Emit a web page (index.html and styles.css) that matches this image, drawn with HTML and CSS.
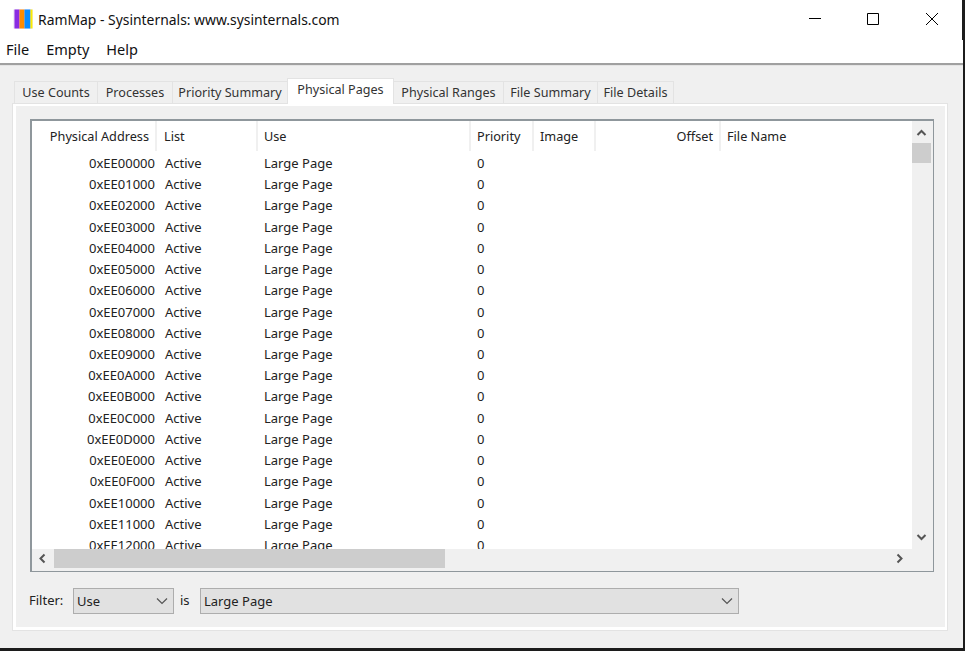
FILE: index.html
```html
<!DOCTYPE html>
<html lang="en">
<head>
<meta charset="utf-8">
<title>RamMap</title>
<link rel="stylesheet" href="styles.css">
</head>
<body>
<div class="window">
  <header class="titlebar">
    <svg class="logo" width="20" height="20" viewBox="0 0 20 20"><rect x="0.5" y="0.5" width="19" height="19" fill="#e6d8f5"/><rect x="1.5" y="0.5" width="5" height="19" fill="#8a2be2"/><rect x="6.5" y="0.5" width="5" height="19" fill="#ff8c00"/><rect x="11.5" y="0.5" width="6" height="19" fill="#0a8cff"/><rect x="17.5" y="0.5" width="2" height="19" fill="#ffee00"/></svg>
    <span class="title">RamMap - Sysinternals: www.sysinternals.com</span>
    <div class="controls">
      <svg class="ctl" width="58" height="40" viewBox="0 0 58 40"><path d="M22 18.5h12" stroke="#000" fill="none"/></svg>
      <svg class="ctl" width="58" height="40" viewBox="0 0 58 40"><path d="M22.5 13.5h11v11h-11z" stroke="#000" fill="none"/></svg>
      <svg class="ctl" width="58" height="40" viewBox="0 0 58 40"><path d="M23 13l12 12M35 13L23 25" stroke="#000" fill="none"/></svg>
    </div>
  </header>
  <nav class="menubar"><span>File</span><span>Empty</span><span>Help</span></nav>
  <main class="client">
    <div class="tabs">
      <span class="tab t1">Use Counts</span><span class="tab t2">Processes</span><span class="tab t3">Priority Summary</span><span class="tab active">Physical Pages</span><span class="tab t5">Physical Ranges</span><span class="tab t6">File Summary</span><span class="tab t7">File Details</span>
    </div>
    <section class="panel">
      <div class="list">
        <div class="list-main">
          <div class="row head">
            <span class="c addr">Physical Address</span><span class="c lst">List</span><span class="c use">Use</span><span class="c pri">Priority</span><span class="c img">Image</span><span class="c off">Offset</span><span class="c fn">File Name</span>
          </div>
          <div class="rows" id="rows"></div>
          <div class="hscroll">
            <svg class="arrow" width="22" height="19" viewBox="0 1 22 19"><path d="M12.5 6.5L8.5 10.5L12.5 14.5" fill="none" stroke="#555" stroke-width="2"/></svg>
            <div class="hthumb"></div>
            <svg class="arrow right" width="21" height="19" viewBox="0 1 21 19"><path d="M6.5 6.5L10.5 10.5L6.5 14.5" fill="none" stroke="#555" stroke-width="2"/></svg>
          </div>
        </div>
        <div class="vscroll">
          <svg class="arrow" width="19" height="22" viewBox="0 0 19 22"><path d="M5.5 14L9.5 10L13.5 14" fill="none" stroke="#555" stroke-width="2"/></svg>
          <div class="vthumb"></div>
          <svg class="arrow down" width="19" height="21" viewBox="0 0 19 21"><path d="M5.5 9L9.5 13L13.5 9" fill="none" stroke="#555" stroke-width="2"/></svg>
        </div>
      </div>
      <div class="filter">
        <span class="flabel">Filter:</span>
        <div class="combo small"><span>Use</span><svg width="12" height="8" viewBox="0 0 12 8"><path d="M1 1.5L6 6.5L11 1.5" fill="none" stroke="#555" stroke-width="1.2"/></svg></div>
        <span class="is">is</span>
        <div class="combo large"><span>Large Page</span><svg width="12" height="8" viewBox="0 0 12 8"><path d="M1 1.5L6 6.5L11 1.5" fill="none" stroke="#555" stroke-width="1.2"/></svg></div>
      </div>
    </section>
  </main>
</div>
<script src="rows.js"></script>
</body>
</html>
```
FILE: rows.js
```js
var host = document.getElementById('rows');
var html = '';
for (var i = 0; i < 19; i++) {
  var a = '0xEE' + (i < 16 ? '0' + i.toString(16).toUpperCase() : '1' + (i - 16)) + '000';
  html += '<div class="row"><span class="c addr">' + a + '</span><span class="c lst">Active</span><span class="c use">Large Page</span><span class="c pri">0</span></div>';
}
host.innerHTML = html;
```
FILE: styles.css
```css
* { box-sizing: border-box; }
html, body { margin: 0; height: 100%; overflow: hidden; background: #1c1c1c; }
body { font-family: "Noto Sans", sans-serif; font-size: 13px; color: #1a1a1a; }
.window { width: 963px; height: 648px; background: #f0f0f0; display: flex; flex-direction: column; }
.titlebar { height: 40px; background: #fff; display: flex; align-items: center; padding-left: 13px; flex: none; border-right: 1px solid #1c1c1c; }
.logo { flex: none; margin-top: -2px; }
.title { margin-left: 5px; font-size: 13.9px; color: #111; margin-top: -1px; }
.controls { margin-left: auto; display: flex; margin-right: 1px; }
.ctl { display: block; }
.menubar { height: 23px; background: #fff; display: flex; gap: 17px; padding-left: 6px; font-size: 14.5px; line-height: 19px; flex: none; color: #111; }
.client { flex: 1; border-top: 2px solid #a0a0a0; padding: 13px 15px 17px 12px; display: flex; flex-direction: column; box-shadow: inset 0 1px 0 #e4e4e4; }
.tabs { display: flex; height: 25px; padding: 3px 0 0 2px; flex: none; position: relative; z-index: 1; font-size: 12.6px; }
.tab { height: 22px; line-height: 21px; text-align: center; background: #f0f0f0; border: 1px solid #e3e3e3; border-bottom: none; margin-right: -1px; color: #333; white-space: nowrap; flex: none; }
.t1 { width: 84px; }
.t2 { width: 76px; }
.t3 { width: 116px; }
.t5 { width: 111px; }
.t6 { width: 95px; }
.t7 { width: 77px; }
.tab.active { width: 107px; height: 26px; margin-top: -3px; background: #fff; line-height: 22px; position: relative; }
.panel { flex: 1; min-height: 0; border: 1px solid #e3e3e3; box-shadow: inset 3px 2px 0 #fff, inset -2px -3px 0 #fff; background: #f0f0f0; padding: 15px 13px 15px 17px; display: flex; flex-direction: column; }
.list { width: 904px; height: 453px; border: 1px solid #8f979c; border-top-width: 2px; border-left-width: 2px; background: #fff; display: flex; flex: none; }
.list-main { width: 880px; display: flex; flex-direction: column; flex: none; }
.row { display: flex; height: 21.22px; line-height: 21px; white-space: nowrap; color: #222; }
.head { height: 32px; line-height: 30px; flex: none; font-size: 12.7px; }
.head .c { height: 30px; border-right: 2px solid #f0f0f0; color: #222; }
.c { display: block; padding: 0 6px; overflow: hidden; flex: none; }
.addr { width: 125px; text-align: right; padding: 0 2px 0 0; }
.head .addr { padding-right: 6px; }
.lst { width: 101px; padding-left: 7px; }
.rows .lst { padding-left: 8px; }
.use { width: 213px; }
.pri { width: 63px; }
.img { width: 62px; }
.off { width: 125px; text-align: right; }
.fn { width: 180px; border-right: none !important; }
.rows { flex: 1; min-height: 0; overflow: hidden; }
.hscroll { height: 22px; padding-bottom: 3px; background: #f0f0f0; flex: none; display: flex; }
.arrow { display: block; flex: none; }
.hthumb { width: 391px; height: 100%; background: #cdcdcd; }
.arrow.right { margin-left: auto; }
.vscroll { width: 21px; background: #f0f0f0; display: flex; flex-direction: column; flex: none; }
.vthumb { width: 19px; height: 20px; background: #cdcdcd; }
.arrow.down { margin-top: auto; margin-bottom: 24px; }
.filter { display: flex; align-items: center; margin: 16px 0 0 -1px; flex: none; height: 26px; color: #222; }
.flabel { width: 44px; margin-top: -2px; }
.combo { height: 26px; background: #e1e1e1; border: 1px solid #adadad; display: flex; align-items: center; justify-content: space-between; padding: 0 3px; }
.combo svg { margin-right: 2px; }
.small { width: 101px; }
.large { width: 539px; }
.is { width: 26px; padding-left: 6px; margin-top: -2px; }
```
